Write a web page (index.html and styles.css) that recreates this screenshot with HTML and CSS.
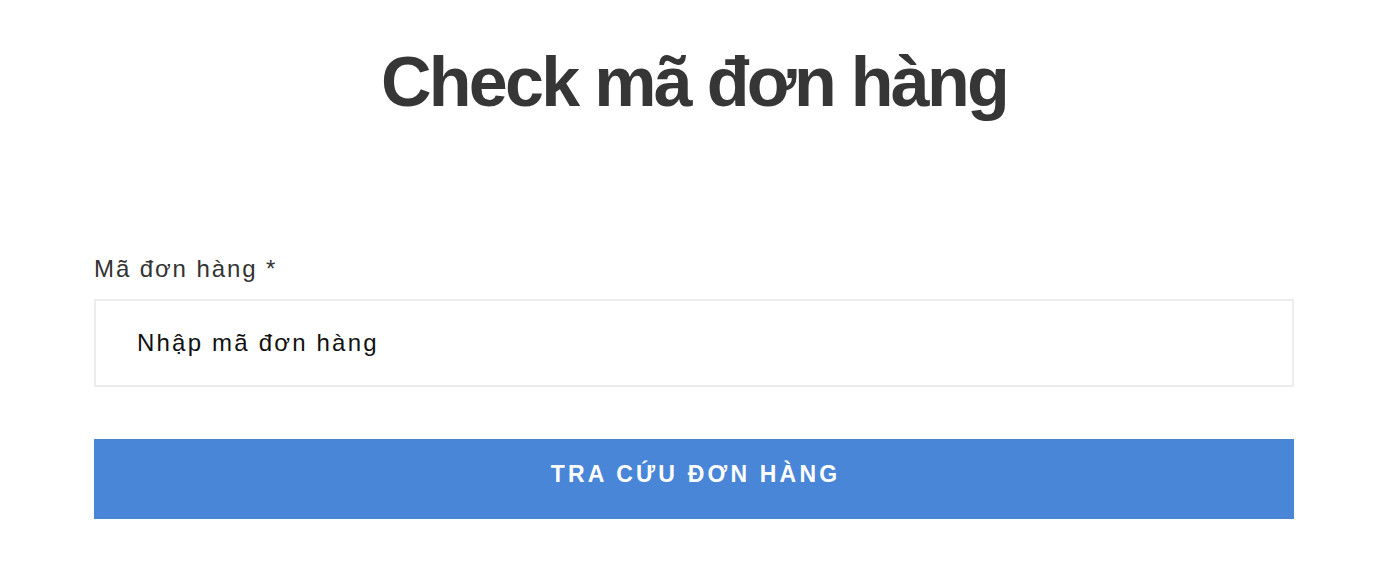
FILE: index.html
```html
<!DOCTYPE html>
<html lang="vi">
<head>
<meta charset="utf-8">
<title>Check mã đơn hàng</title>
<link rel="stylesheet" href="styles.css">
</head>
<body>
<main class="page">
  <h1 class="title">Check mã đơn hàng</h1>
  <form class="form">
    <label class="label" for="code">Mã đơn hàng *</label>
    <input class="input" id="code" type="text" placeholder="Nhập mã đơn hàng">
    <button class="button" type="button">TRA CỨU ĐƠN HÀNG</button>
  </form>
</main>
</body>
</html>
```
FILE: styles.css
```css
* { box-sizing: border-box; }
html, body { margin: 0; padding: 0; background: #fff; }
body { font-family: "Liberation Sans", Arial, sans-serif; color: #333; }
.page { width: 1200px; margin-left: 94px; padding-top: 42px; }
.title {
  margin: 0;
  text-align: center;
  font-size: 70px;
  line-height: 80px;
  font-weight: 700;
  color: #363636;
  letter-spacing: -2.7px;
}
.form { display: flex; flex-direction: column; margin-top: 132px; }
.label {
  font-size: 24px;
  line-height: 30px;
  color: #333;
  letter-spacing: 1.9px;
  margin-bottom: 15px;
}
.input {
  height: 88px;
  border: 2px solid #ececec;
  padding: 0 0 0 41px;
  font-family: inherit;
  font-size: 24px;
  letter-spacing: 2.2px;
  color: #111;
  outline: none;
}
.input::placeholder { color: #111; opacity: 1; }
.button {
  margin-top: 52px;
  height: 80px;
  border: 0;
  padding: 0 0 10px 3px;
  background: #4a86d8;
  color: #fff;
  font-family: inherit;
  font-weight: 700;
  font-size: 23px;
  letter-spacing: 3.2px;
  cursor: pointer;
}
```
